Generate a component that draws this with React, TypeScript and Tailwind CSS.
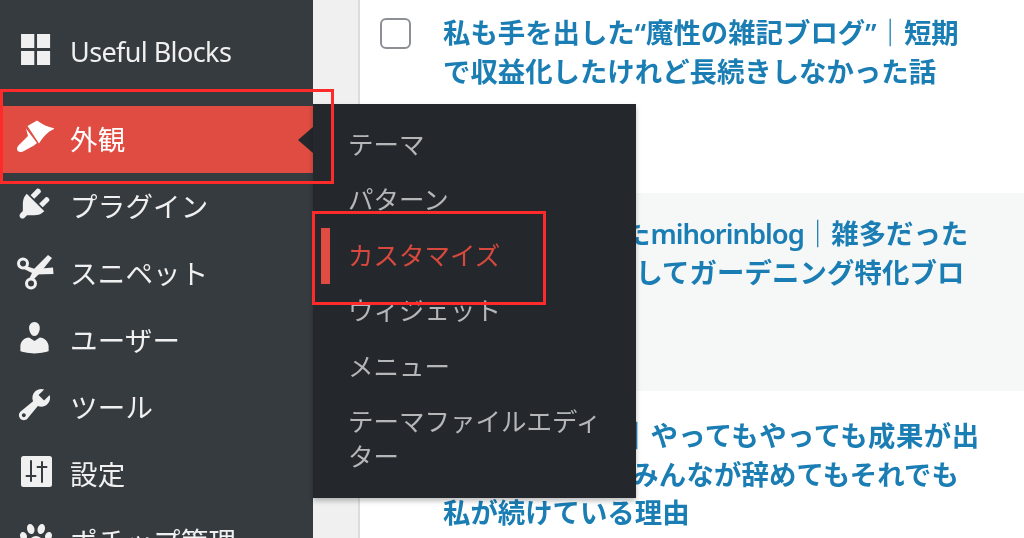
import { FaPaw } from "react-icons/fa";

const FONT = "font-['Noto_Sans','Noto_Sans_CJK_JP',sans-serif]";

function Dash({ d }: { d: string }) {
  return (
    <svg viewBox="0 0 20 20" className="w-[39px] h-[39px] fill-[#f0f0f1]">
      <path d={d} />
    </svg>
  );
}

function Brush() {
  return (
    <svg viewBox="0 0 39 39" className="w-[39px] h-[39px] fill-white">
      <path d="M22 3.5C28 8 33 10 40 11.5 33 14 28 20 24 26.5L12.5 9z" />
      <path d="M11 11.5 22 26l-3 2.5-10 5.5c-3 2-7 1-7-2 0-2 1-3 3-5l8-8z" />
    </svg>
  );
}

function Scissors() {
  return (
    <svg viewBox="0 0 39 39" className="w-[39px] h-[39px]">
      <circle cx="8" cy="12.5" r="4.5" fill="none" stroke="#f0f0f1" strokeWidth="3" />
      <circle cx="16" cy="32.5" r="4.5" fill="none" stroke="#f0f0f1" strokeWidth="3" />
      <path d="M11 15 20 18 38 16.5 38.5 23 20 23.5 9 18z" fill="#f0f0f1" />
      <path d="M18 29 14.5 27 19 18 33 4 37 7 25 22z" fill="#f0f0f1" />
    </svg>
  );
}

function Sliders() {
  return (
    <svg viewBox="0 0 39 39" className="w-[39px] h-[39px]">
      <rect x="6" y="4" width="31" height="31" rx="2.5" fill="#f0f0f1" />
      <g stroke="#363b3f" strokeWidth="2" strokeLinecap="round" fill="none">
        <path d="M16 9v20M11.5 24h9" />
        <path d="M27 30V10M22.5 15h9" />
      </g>
    </svg>
  );
}

const icons = {
  blocks: "M3.1 2h6.8v7.2H3.1zM11.3 2H18v7.2h-6.7zM3.1 10.8h6.8V18H3.1zM11.3 10.8H18V18h-6.7z",
  plugin:
    "M13.11 4.36L9.87 7.6 8 5.73l3.24-3.24c.35-.34 1.05-.2 1.56.32.52.51.66 1.21.31 1.55zm-8 1.77l.91-1.12 9.01 9.01-1.19.84c-.71.71-2.63 1.16-3.82 1.16H6.14L4.9 17.26c-.59.59-1.54.59-2.12 0-.59-.58-.59-1.53 0-2.12l1.24-1.24v-3.88c0-1.13.4-3.19 1.09-3.89zm7.26 3.97l3.24-3.24c.34-.35 1.04-.21 1.55.31.52.51.66 1.21.31 1.55l-3.24 3.25z",
  user:
    "M10 9.25c-2.27 0-2.73-3.44-2.73-3.44C7 4.02 7.82 2 9.97 2c2.16 0 2.98 2.02 2.71 3.81 0 0-.41 3.44-2.68 3.44zm0 2.57L12.72 10c2.39 0 4.52 2.33 4.52 4.53v2.49s-3.65 1.13-7.24 1.13c-3.65 0-7.24-1.13-7.24-1.13v-2.49c0-2.25 1.94-4.48 4.47-4.48z",
  tools:
    "M16.68 9.77c-1.34 1.34-3.3 1.67-4.95.99l-5.41 6.52c-.99.99-2.59.99-3.58 0s-.99-2.59 0-3.57l6.52-5.42c-.68-1.65-.35-3.61.99-4.95 1.28-1.28 3.12-1.62 4.72-1.06l-2.89 2.89 2.82 2.82 2.86-2.87c.53 1.58.18 3.39-1.08 4.65zM3.81 16.21c.4.39 1.04.39 1.43 0 .4-.4.4-1.04 0-1.43-.39-.4-1.03-.4-1.43 0-.39.39-.39 1.03 0 1.43z",
};

function MenuItem({ icon, label, active, tight }: { icon: React.ReactNode; label: string; active?: boolean; tight?: boolean }) {
  return (
    <div
      className={
        "relative flex items-center h-[67px] shrink-0 text-[27.5px] text-[#f0f0f1] " +
        (active ? "bg-[#e04c41] text-white" : "")
      }
    >
      <div className="w-[70px] pl-[15px] pb-[7px] flex items-center">{icon}</div>
      <span className={tight ? "text-[27px] tracking-[-0.6px]" : "tracking-[0.2px]"}>{label}</span>
      {active && (
        <div className="absolute right-0 top-[21px] w-0 h-0 border-y-[13px] border-y-transparent border-r-[15px] border-r-[#24282c]" />
      )}
    </div>
  );
}

function Flyout() {
  const items = ["テーマ", "パターン", "カスタマイズ", "ウィジェット", "メニュー"];
  return (
    <div className="absolute left-[313px] top-[104px] w-[323px] h-[394px] bg-[#24282c] pt-[12px] shadow-[0_3px_5px_rgba(0,0,0,0.25)] text-[25.5px] text-[#b4b6b8]">
      {items.map((item) => (
        <div key={item} className="relative h-[55.5px] pl-[35px] flex items-center">
          {item === "カスタマイズ" && <div className="absolute left-[8px] top-[1px] w-[9px] h-[56px] bg-[#e04c41]" />}
          <span className={item === "カスタマイズ" ? "text-[#d9483d]" : ""}>{item}</span>
        </div>
      ))}
      <div className="pl-[35px] pr-[20px] leading-[35px] pt-[10px]">テーマファイルエディター</div>
    </div>
  );
}

function TableRow({
  children,
  h,
  pt,
  alt,
  check,
}: {
  children: React.ReactNode;
  h: string;
  pt: string;
  alt?: boolean;
  check?: boolean;
}) {
  return (
    <div className={"flex shrink-0 pl-[20px] " + h + " " + (alt ? "bg-[#f6f7f7]" : "bg-white")}>
      <div className="w-[63px] pt-[18px] shrink-0">
        {check && <div className="w-[31px] h-[31px] rounded-[6px] border-2 border-[#8c8f94] bg-white" />}
      </div>
      <div className={"text-[27.4px] leading-[38.5px] font-semibold text-[#1a7db3] whitespace-nowrap " + pt}>
        {children}
      </div>
    </div>
  );
}

export default function App() {
  return (
    <div className={"relative flex w-[1024px] h-[538px] overflow-hidden bg-white blur-[0.4px] " + FONT}>
      <aside className="w-[313px] h-full shrink-0 bg-[#363b3f] pt-[19px] flex flex-col">
        <MenuItem tight icon={<Dash d={icons.blocks} />} label="Useful Blocks" />
        <div className="h-[20px] shrink-0" />
        <MenuItem active icon={<Brush />} label="外観" />
        <MenuItem icon={<Dash d={icons.plugin} />} label="プラグイン" />
        <MenuItem icon={<Scissors />} label="スニペット" />
        <MenuItem icon={<Dash d={icons.user} />} label="ユーザー" />
        <MenuItem icon={<Dash d={icons.tools} />} label="ツール" />
        <MenuItem icon={<Sliders />} label="設定" />
        <MenuItem icon={<FaPaw className="w-[32px] h-[32px] ml-[5px] fill-[#f0f0f1]" />} label="ポチップ管理" />
      </aside>
      <div className="w-[45px] h-full shrink-0 bg-[#f0f0f1]" />
      <main className="flex-1 h-full flex flex-col border-l-2 border-[#dcdcde] bg-white">
        <TableRow check h="h-[193px]" pt="pt-[14px]">
          <div>私も手を出した“魔性の雑記ブログ”｜短期</div>
          <div>で収益化したけれど長続きしなかった話</div>
        </TableRow>
        <TableRow alt h="h-[198px]" pt="pt-[22px]">
          <div>
            私が2年間続けた<span className="tracking-[-1px]">mihorinblog</span>｜雑多だった
          </div>
          <div className="tracking-[0.1px]">ブログから転換してガーデニング特化ブロ</div>
        </TableRow>
        <TableRow h="h-[147px]" pt="pt-[26px]">
          <div>
            ブログ歴5年目｜<span className="tracking-[0.5px]">やってもやっても成果が出</span>
          </div>
          <div className="tracking-[0.15px]">ない7年間でも みんなが辞めてもそれでも</div>
          <div>私が続けている理由</div>
        </TableRow>
      </main>
      <Flyout />
      <div className="absolute left-0 top-[89px] w-[334px] h-[95px] border-[3px] border-[#ff2a2a]" />
      <div className="absolute left-[312px] top-[211px] w-[234px] h-[94px] border-[3px] border-[#ff2a2a]" />
    </div>
  );
}
